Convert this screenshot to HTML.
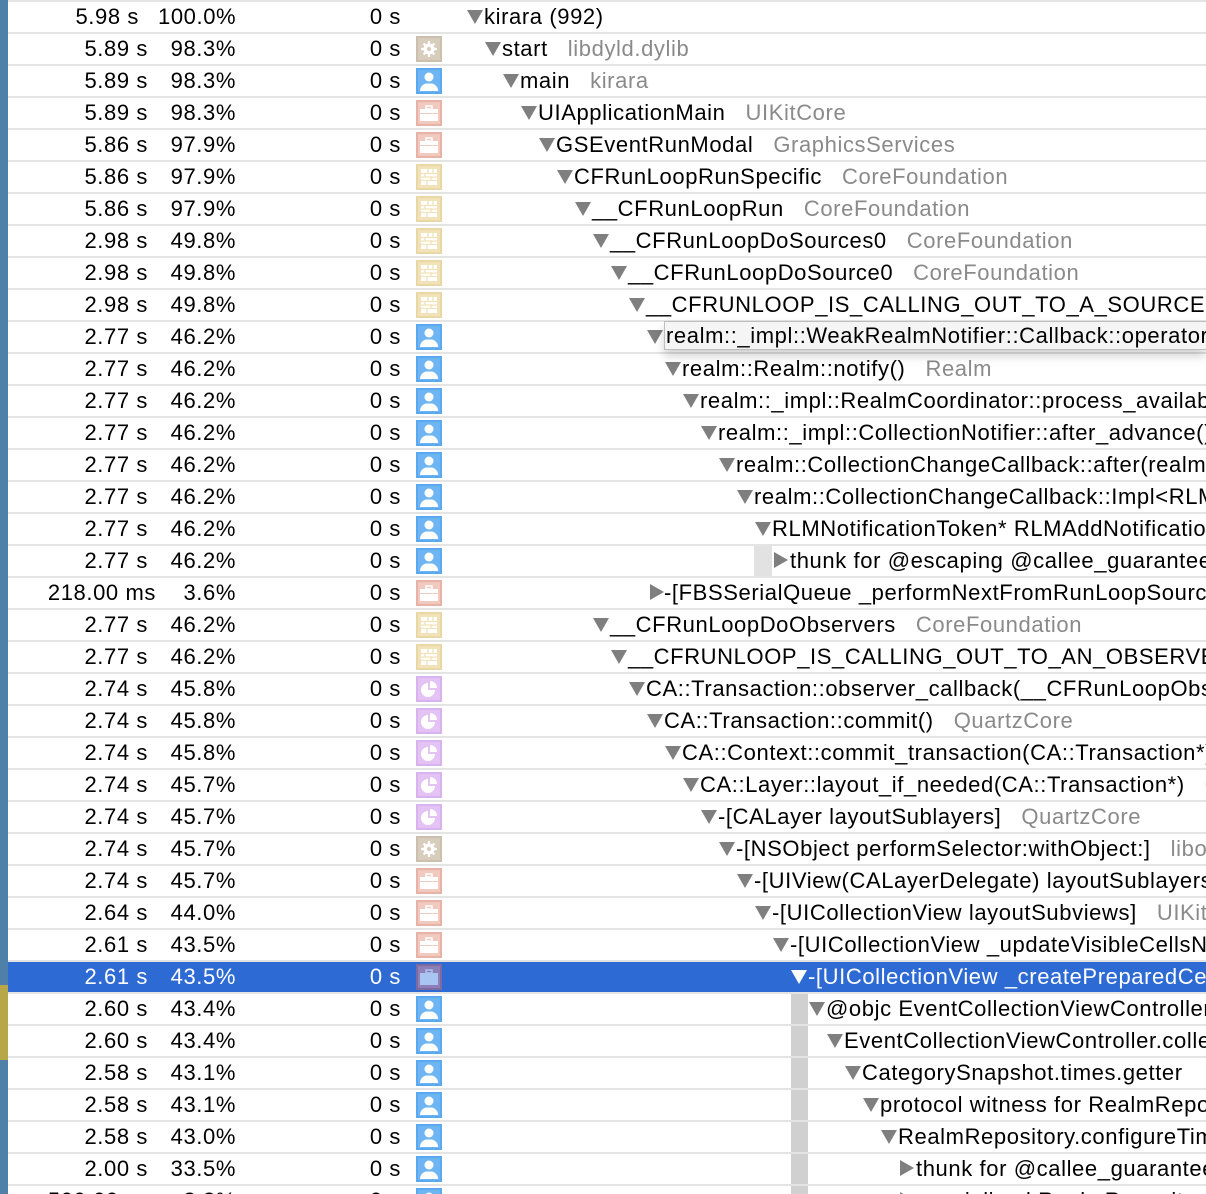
<!DOCTYPE html>
<html><head><meta charset="utf-8"><style>
*{margin:0;padding:0;box-sizing:border-box}
html,body{width:1206px;height:1194px;overflow:hidden}
body{background:#fff;font-family:"Liberation Sans",Arial,sans-serif;font-size:22px;letter-spacing:0.6px;color:#000;position:relative}
.strip{position:absolute;left:0;top:0;width:8px;height:1194px;background:#4f80a8}
.y{position:absolute;left:0;top:985px;width:8px;height:75px;background:#b7a747}
.r{position:absolute;left:8px;width:1198px;height:32px;border-top:2px solid #e4e4e4;white-space:nowrap;overflow:hidden}
.r b{position:absolute;font-weight:normal;top:2px;line-height:26px;text-align:right}
.t{left:0;width:140px}.p{left:150px;width:78px}.z{left:300px;width:93px}
.ic{position:absolute;left:408px;top:2px;width:26px;height:26px}
.tr{position:absolute;top:8px;width:0;height:0;border-left:8px solid transparent;border-right:8px solid transparent;border-top:14px solid #7f7f7f}
.tr.c{top:6px;border-top:8px solid transparent;border-bottom:8px solid transparent;border-left:14px solid #7f7f7f;border-right:0}
.n{position:absolute;top:2px;line-height:26px}
.n em{font-style:normal;color:#8a8a8a;margin-left:20px}
.sel{background:#2d6ad3;color:#fff;border-top-color:#e4e4e4}
.bar{position:absolute;background:#d0d0d0}
.tip{position:absolute;left:664px;top:321px;width:542px;height:29px;background:#f5f5f5;border:1px solid #bdbdbd;border-right:0;box-shadow:0 6px 10px rgba(0,0,0,.18);font-size:22px;line-height:27px;padding-left:1px;white-space:nowrap;overflow:hidden}
</style></head><body>
<svg width="0" height="0" style="position:absolute">
<defs>
<symbol id="u" viewBox="0 0 26 26"><rect width="26" height="26" fill="#5aa9f0"/><rect x="2" y="2" width="22" height="22" fill="#6fb5f3"/><circle cx="13" cy="9" r="4.5" fill="#fff"/><path d="M4 23c0-5 4-7 6-7.5h6c2 .5 6 2.5 6 7.5z" fill="#fff"/></symbol>
<symbol id="g" viewBox="0 0 26 26"><rect width="26" height="26" fill="#cbbfae"/><rect x="2" y="2" width="22" height="22" fill="#d8cdbd"/><circle cx="13" cy="13" r="5.5" fill="#fff"/><circle cx="13" cy="13" r="2.2" fill="#d8cdbd"/><path d="M13 5v3M13 18v3M5 13h3M18 13h3M7.5 7.5l2 2M16.5 16.5l2 2M18.5 7.5l-2 2M7.5 18.5l2-2" stroke="#fff" stroke-width="2.2"/></symbol>
<symbol id="k" viewBox="0 0 26 26"><rect width="26" height="26" fill="#e8b3a6"/><rect x="2" y="2" width="22" height="22" fill="#f1c9bf"/><rect x="10" y="6" width="6" height="3" fill="none" stroke="#fff" stroke-width="1.5"/><rect x="4" y="9" width="18" height="12" fill="#fff"/><rect x="4" y="13" width="18" height="1" fill="#f1c9bf"/></symbol>
<symbol id="ks" viewBox="0 0 26 26"><rect width="26" height="26" fill="#7d6aa0"/><rect x="2" y="2" width="22" height="22" fill="#8d7fb8"/><rect x="10" y="6" width="6" height="3" fill="none" stroke="#a9c4f0" stroke-width="1.5"/><rect x="4" y="9" width="18" height="12" fill="#a9c4f0"/></symbol>
<symbol id="w" viewBox="0 0 26 26"><rect width="26" height="26" fill="#ead7a6"/><rect x="2" y="2" width="22" height="22" fill="#f1e2b9"/><rect x="5" y="5" width="16" height="16" fill="#fff"/><path d="M5 9.5h16M5 13h16M5 16.5h16M12 5v4.5M9 9.5v3.5M15 13v3.5M11 16.5v4.5M17 5v4.5" stroke="#f1e2b9" stroke-width="1.3"/></symbol>
<symbol id="q" viewBox="0 0 26 26"><rect width="26" height="26" fill="#d9b3ef"/><rect x="2" y="2" width="22" height="22" fill="#e2c3f3"/><path d="M12 7a7 7 0 1 0 7 7h-7z" fill="#fff"/><path d="M14 5v7h7a7 7 0 0 0-7-7z" fill="#fff"/></symbol>
</defs></svg>
<div class="strip"></div><div class="y"></div>

<div class="r" style="top:0"><b class="t" style="width:131px">5.98 s</b><b class="p">100.0%</b><b class="z">0 s</b><s class="tr" style="left:459px"></s><span class="n" style="left:476px">kirara (992)</span></div>
<div class="r" style="top:32px"><b class="t">5.89 s</b><b class="p">98.3%</b><b class="z">0 s</b><svg class="ic"><use href="#g"/></svg><s class="tr" style="left:477px"></s><span class="n" style="left:494px">start<em>libdyld.dylib</em></span></div>
<div class="r" style="top:64px"><b class="t">5.89 s</b><b class="p">98.3%</b><b class="z">0 s</b><svg class="ic"><use href="#u"/></svg><s class="tr" style="left:495px"></s><span class="n" style="left:512px">main<em>kirara</em></span></div>
<div class="r" style="top:96px"><b class="t">5.89 s</b><b class="p">98.3%</b><b class="z">0 s</b><svg class="ic"><use href="#k"/></svg><s class="tr" style="left:513px"></s><span class="n" style="left:530px">UIApplicationMain<em>UIKitCore</em></span></div>
<div class="r" style="top:128px"><b class="t">5.86 s</b><b class="p">97.9%</b><b class="z">0 s</b><svg class="ic"><use href="#k"/></svg><s class="tr" style="left:531px"></s><span class="n" style="left:548px">GSEventRunModal<em>GraphicsServices</em></span></div>
<div class="r" style="top:160px"><b class="t">5.86 s</b><b class="p">97.9%</b><b class="z">0 s</b><svg class="ic"><use href="#w"/></svg><s class="tr" style="left:549px"></s><span class="n" style="left:566px">CFRunLoopRunSpecific<em>CoreFoundation</em></span></div>
<div class="r" style="top:192px"><b class="t">5.86 s</b><b class="p">97.9%</b><b class="z">0 s</b><svg class="ic"><use href="#w"/></svg><s class="tr" style="left:567px"></s><span class="n" style="left:584px">__CFRunLoopRun<em>CoreFoundation</em></span></div>
<div class="r" style="top:224px"><b class="t">2.98 s</b><b class="p">49.8%</b><b class="z">0 s</b><svg class="ic"><use href="#w"/></svg><s class="tr" style="left:585px"></s><span class="n" style="left:602px">__CFRunLoopDoSources0<em>CoreFoundation</em></span></div>
<div class="r" style="top:256px"><b class="t">2.98 s</b><b class="p">49.8%</b><b class="z">0 s</b><svg class="ic"><use href="#w"/></svg><s class="tr" style="left:603px"></s><span class="n" style="left:620px">__CFRunLoopDoSource0<em>CoreFoundation</em></span></div>
<div class="r" style="top:288px"><b class="t">2.98 s</b><b class="p">49.8%</b><b class="z">0 s</b><svg class="ic"><use href="#w"/></svg><s class="tr" style="left:621px"></s><span class="n" style="left:638px">__CFRUNLOOP_IS_CALLING_OUT_TO_A_SOURCE0_PERFORM_FUNCTION__</span></div>
<div class="r" style="top:320px"><b class="t">2.77 s</b><b class="p">46.2%</b><b class="z">0 s</b><svg class="ic"><use href="#u"/></svg><s class="tr" style="left:639px"></s></div>
<div class="r" style="top:352px"><b class="t">2.77 s</b><b class="p">46.2%</b><b class="z">0 s</b><svg class="ic"><use href="#u"/></svg><s class="tr" style="left:657px"></s><span class="n" style="left:674px">realm::Realm::notify()<em>Realm</em></span></div>
<div class="r" style="top:384px"><b class="t">2.77 s</b><b class="p">46.2%</b><b class="z">0 s</b><svg class="ic"><use href="#u"/></svg><s class="tr" style="left:675px"></s><span class="n" style="left:692px">realm::_impl::RealmCoordinator::process_available_async</span></div>
<div class="r" style="top:416px"><b class="t">2.77 s</b><b class="p">46.2%</b><b class="z">0 s</b><svg class="ic"><use href="#u"/></svg><s class="tr" style="left:693px"></s><span class="n" style="left:710px">realm::_impl::CollectionNotifier::after_advance()</span></div>
<div class="r" style="top:448px"><b class="t">2.77 s</b><b class="p">46.2%</b><b class="z">0 s</b><svg class="ic"><use href="#u"/></svg><s class="tr" style="left:711px"></s><span class="n" style="left:728px">realm::CollectionChangeCallback::after(realm</span></div>
<div class="r" style="top:480px"><b class="t">2.77 s</b><b class="p">46.2%</b><b class="z">0 s</b><svg class="ic"><use href="#u"/></svg><s class="tr" style="left:729px"></s><span class="n" style="left:746px">realm::CollectionChangeCallback::Impl&lt;RLMNotif</span></div>
<div class="r" style="top:512px"><b class="t">2.77 s</b><b class="p">46.2%</b><b class="z">0 s</b><svg class="ic"><use href="#u"/></svg><s class="tr" style="left:747px"></s><span class="n" style="left:764px">RLMNotificationToken* RLMAddNotificationBlock</span></div>
<div class="r" style="top:544px"><b class="t">2.77 s</b><b class="p">46.2%</b><b class="z">0 s</b><svg class="ic"><use href="#u"/></svg><div class="bar" style="left:746px;top:0;width:18px;height:30px;background:#e2e2e2"></div><s class="tr c" style="left:766px"></s><span class="n" style="left:782px">thunk for @escaping @callee_guaranteed</span></div>
<div class="r" style="top:576px"><b class="t" style="width:148px">218.00 ms</b><b class="p">3.6%</b><b class="z">0 s</b><svg class="ic"><use href="#k"/></svg><s class="tr c" style="left:642px"></s><span class="n" style="left:656px">-[FBSSerialQueue _performNextFromRunLoopSource]</span></div>
<div class="r" style="top:608px"><b class="t">2.77 s</b><b class="p">46.2%</b><b class="z">0 s</b><svg class="ic"><use href="#w"/></svg><s class="tr" style="left:585px"></s><span class="n" style="left:602px">__CFRunLoopDoObservers<em>CoreFoundation</em></span></div>
<div class="r" style="top:640px"><b class="t">2.77 s</b><b class="p">46.2%</b><b class="z">0 s</b><svg class="ic"><use href="#w"/></svg><s class="tr" style="left:603px"></s><span class="n" style="left:620px">__CFRUNLOOP_IS_CALLING_OUT_TO_AN_OBSERVER_CALLBACK</span></div>
<div class="r" style="top:672px"><b class="t">2.74 s</b><b class="p">45.8%</b><b class="z">0 s</b><svg class="ic"><use href="#q"/></svg><s class="tr" style="left:621px"></s><span class="n" style="left:638px">CA::Transaction::observer_callback(__CFRunLoopObserver</span></div>
<div class="r" style="top:704px"><b class="t">2.74 s</b><b class="p">45.8%</b><b class="z">0 s</b><svg class="ic"><use href="#q"/></svg><s class="tr" style="left:639px"></s><span class="n" style="left:656px">CA::Transaction::commit()<em>QuartzCore</em></span></div>
<div class="r" style="top:736px"><b class="t">2.74 s</b><b class="p">45.8%</b><b class="z">0 s</b><svg class="ic"><use href="#q"/></svg><s class="tr" style="left:657px"></s><span class="n" style="left:674px">CA::Context::commit_transaction(CA::Transaction*)</span></div>
<div class="r" style="top:768px"><b class="t">2.74 s</b><b class="p">45.7%</b><b class="z">0 s</b><svg class="ic"><use href="#q"/></svg><s class="tr" style="left:675px"></s><span class="n" style="left:692px">CA::Layer::layout_if_needed(CA::Transaction*)<em>QuartzCore</em></span></div>
<div class="r" style="top:800px"><b class="t">2.74 s</b><b class="p">45.7%</b><b class="z">0 s</b><svg class="ic"><use href="#q"/></svg><s class="tr" style="left:693px"></s><span class="n" style="left:710px">-[CALayer layoutSublayers]<em>QuartzCore</em></span></div>
<div class="r" style="top:832px"><b class="t">2.74 s</b><b class="p">45.7%</b><b class="z">0 s</b><svg class="ic"><use href="#g"/></svg><s class="tr" style="left:711px"></s><span class="n" style="left:728px">-[NSObject performSelector:withObject:]<em>libobjc</em></span></div>
<div class="r" style="top:864px"><b class="t">2.74 s</b><b class="p">45.7%</b><b class="z">0 s</b><svg class="ic"><use href="#k"/></svg><s class="tr" style="left:729px"></s><span class="n" style="left:746px">-[UIView(CALayerDelegate) layoutSublayersOfLayer:]</span></div>
<div class="r" style="top:896px"><b class="t">2.64 s</b><b class="p">44.0%</b><b class="z">0 s</b><svg class="ic"><use href="#k"/></svg><s class="tr" style="left:747px"></s><span class="n" style="left:764px">-[UICollectionView layoutSubviews]<em>UIKitCore</em></span></div>
<div class="r" style="top:928px"><b class="t">2.61 s</b><b class="p">43.5%</b><b class="z">0 s</b><svg class="ic"><use href="#k"/></svg><s class="tr" style="left:765px"></s><span class="n" style="left:782px">-[UICollectionView _updateVisibleCellsNow:]</span></div>
<div class="r sel" style="top:960px"><b class="t">2.61 s</b><b class="p">43.5%</b><b class="z">0 s</b><svg class="ic"><use href="#ks"/></svg><s class="tr" style="left:783px;border-top-color:#fff"></s><span class="n" style="left:800px">-[UICollectionView _createPreparedCellForItem</span></div>
<div class="bar" style="left:791px;top:994px;width:17px;height:200px"></div>
<div class="r" style="top:992px;background:transparent"><b class="t">2.60 s</b><b class="p">43.4%</b><b class="z">0 s</b><svg class="ic"><use href="#u"/></svg><s class="tr" style="left:801px"></s><span class="n" style="left:818px">@objc EventCollectionViewController</span></div>
<div class="r" style="top:1024px;background:transparent"><b class="t">2.60 s</b><b class="p">43.4%</b><b class="z">0 s</b><svg class="ic"><use href="#u"/></svg><s class="tr" style="left:819px"></s><span class="n" style="left:836px">EventCollectionViewController.collectionView</span></div>
<div class="r" style="top:1056px;background:transparent"><b class="t">2.58 s</b><b class="p">43.1%</b><b class="z">0 s</b><svg class="ic"><use href="#u"/></svg><s class="tr" style="left:837px"></s><span class="n" style="left:854px">CategorySnapshot.times.getter</span></div>
<div class="r" style="top:1088px;background:transparent"><b class="t">2.58 s</b><b class="p">43.1%</b><b class="z">0 s</b><svg class="ic"><use href="#u"/></svg><s class="tr" style="left:855px"></s><span class="n" style="left:872px">protocol witness for RealmRepository</span></div>
<div class="r" style="top:1120px;background:transparent"><b class="t">2.58 s</b><b class="p">43.0%</b><b class="z">0 s</b><svg class="ic"><use href="#u"/></svg><s class="tr" style="left:873px"></s><span class="n" style="left:890px">RealmRepository.configureTimes</span></div>
<div class="r" style="top:1152px;background:transparent"><b class="t">2.00 s</b><b class="p">33.5%</b><b class="z">0 s</b><svg class="ic"><use href="#u"/></svg><s class="tr c" style="left:892px"></s><span class="n" style="left:908px">thunk for @callee_guaranteed</span></div>
<div class="r" style="top:1184px;height:10px;background:transparent"><b class="t" style="width:148px">500.00 ms</b><b class="p">8.3%</b><b class="z">0 s</b><svg class="ic"><use href="#u"/></svg><s class="tr c" style="left:892px"></s><span class="n" style="left:908px">specialized RealmRepository</span></div>
<div class="tip">realm::_impl::WeakRealmNotifier::Callback::operator()()</div>
</body></html>
